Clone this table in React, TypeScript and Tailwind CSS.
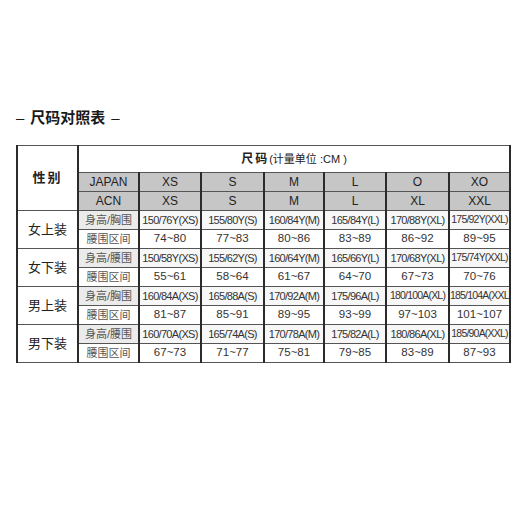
import React from "react"

const cjk = { fontFamily: '"Liberation Sans", "Noto Sans CJK SC", sans-serif' }

const colWidths = [61, 61, 62, 63, 60, 62, 63, 61]

const japan = ["XS", "S", "M", "L", "O", "XO"]
const acn = ["XS", "S", "M", "L", "XL", "XXL"]

const groups = [
    {
        name: "女上装",
        label: "身高/胸围",
        sizes: ["150/76Y(XS)", "155/80Y(S)", "160/84Y(M)", "165/84Y(L)", "170/88Y(XL)", "175/92Y(XXL)"],
        waist: ["74~80", "77~83", "80~86", "83~89", "86~92", "89~95"],
    },
    {
        name: "女下装",
        label: "身高/腰围",
        sizes: ["150/58Y(XS)", "155/62Y(S)", "160/64Y(M)", "165/66Y(L)", "170/68Y(XL)", "175/74Y(XXL)"],
        waist: ["55~61", "58~64", "61~67", "64~70", "67~73", "70~76"],
    },
    {
        name: "男上装",
        label: "身高/胸围",
        sizes: ["160/84A(XS)", "165/88A(S)", "170/92A(M)", "175/96A(L)", "180/100A(XL)", "185/104A(XXL)"],
        waist: ["81~87", "85~91", "89~95", "93~99", "97~103", "101~107"],
    },
    {
        name: "男下装",
        label: "身高/腰围",
        sizes: ["160/70A(XS)", "165/74A(S)", "170/78A(M)", "175/82A(L)", "180/86A(XL)", "185/90A(XXL)"],
        waist: ["67~73", "71~77", "75~81", "79~85", "83~89", "87~93"],
    },
]

const cell = "border-y border-y-[#555] border-x-2 border-x-[#2b2b2b] p-0 text-center align-middle whitespace-nowrap overflow-hidden"

export default function App() {
    return (
        <div className="w-[520px] h-[520px] bg-white text-[#333] pt-[108px] pl-4" style={cjk}>
            <h1 className="flex items-center gap-[6px] text-[15px] font-bold leading-5 text-[#1a1a1a]">
                <span className="font-normal">–</span>
                <span>尺码对照表</span>
                <span className="font-normal">–</span>
            </h1>
            <table className="mt-[17px] border-collapse table-fixed border border-[#555]" style={{ width: 493 }}>
                <colgroup>
                    {colWidths.map((w, i) => (
                        <col key={i} style={{ width: w }} />
                    ))}
                </colgroup>
                <tbody>
                    <tr className="h-[27px]">
                        <td rowSpan={3} className={cell + " text-[13px] font-bold tracking-[2px] text-[#222]"}>性别</td>
                        <td colSpan={7} className={cell + " text-[12px] text-[#222]"}>
                            <span className="font-bold tracking-[2px]">尺码</span>
                            <span className="text-[11px]">(计量单位 :CM )</span>
                        </td>
                    </tr>
                    <tr className="h-[19px] bg-[#c6c6c6] text-[12px] text-[#222]">
                        <td className={cell}>JAPAN</td>
                        {japan.map((s) => (
                            <td key={s} className={cell}>{s}</td>
                        ))}
                    </tr>
                    <tr className="h-[18px] bg-[#c6c6c6] text-[12px] text-[#222]">
                        <td className={cell}>ACN</td>
                        {acn.map((s) => (
                            <td key={s} className={cell}>{s}</td>
                        ))}
                    </tr>
                    {groups.map((g) => (
                        <React.Fragment key={g.name}>
                            <tr className="h-[19px] text-[11px] tracking-[-0.7px]">
                                <td rowSpan={2} className={cell + " text-[13px] tracking-normal text-[#222]"}>{g.name}</td>
                                <td className={cell + " bg-[#ebebeb] text-[#555] tracking-normal"}>{g.label}</td>
                                {g.sizes.map((s) => (
                                    <td
                                        key={s}
                                        className={cell + (s.length >= 12 ? " bg-[#f7f7f7] text-[10.5px] tracking-[-0.8px]" : " bg-[#f7f7f7]")}
                                    >
                                        {s}
                                    </td>
                                ))}
                            </tr>
                            <tr className="h-[19px] text-[11.5px]">
                                <td className={cell + " text-[11px] text-[#555]"}>腰围区间</td>
                                {g.waist.map((s) => (
                                    <td key={s} className={cell}>{s}</td>
                                ))}
                            </tr>
                        </React.Fragment>
                    ))}
                </tbody>
            </table>
        </div>
    )
}
